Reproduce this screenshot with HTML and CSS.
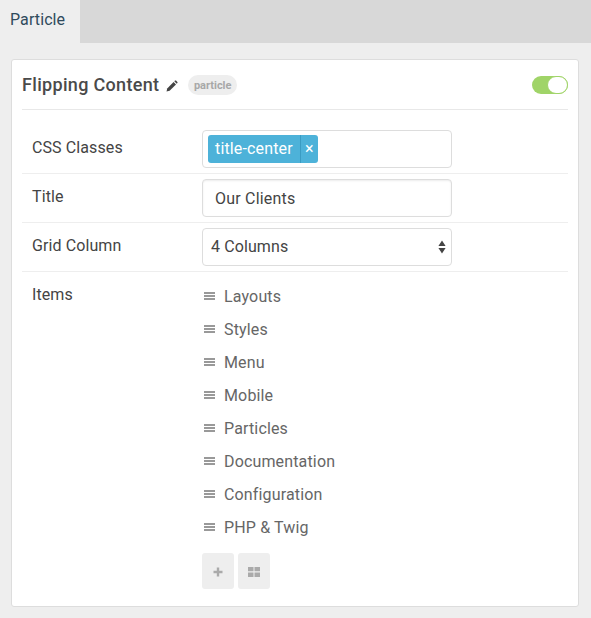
FILE: index.html
```html
<!DOCTYPE html>
<html lang="en">
<head>
  <meta charset="UTF-8">
  <title>Particle</title>
  <link rel="stylesheet" href="styles.css">
</head>
<body>
  <div class="tabs">
    <div class="tab">Particle</div>
  </div>

  <div class="card">
    <div class="card-head">
      <h4>Flipping Content</h4>
      <svg class="pencil" width="12" height="12" viewBox="0 0 12 12">
        <path d="M0.5 11.5 L1.2 8.4 L7.6 2 L10 4.4 L3.6 10.8 Z" fill="#444"/>
        <path d="M8.3 1.3 L9 0.6 Q9.5 0.2 10 0.6 L11.4 2 Q11.8 2.5 11.4 3 L10.7 3.7 Z" fill="#444"/>
      </svg>
      <span class="badge">particle</span>
      <div class="toggle"><span class="knob"></span></div>
    </div>

    <div class="row">
      <label>CSS Classes</label>
      <div class="field tags">
        <span class="tag"><span class="tag-name">title-center</span><span class="tag-x">×</span></span>
      </div>
    </div>

    <div class="row">
      <label>Title</label>
      <div class="field text">Our Clients</div>
    </div>

    <div class="row">
      <label>Grid Column</label>
      <div class="field select">
        4 Columns
        <svg class="arrows" width="8" height="14" viewBox="0 0 8 14">
          <path d="M4 0.5 L7.6 6 L0.4 6 Z M4 13.5 L0.4 8 L7.6 8 Z" fill="#444"/>
        </svg>
      </div>
    </div>

    <div class="row items-row">
      <label>Items</label>
      <div class="items">
        <ul>
          <li>Layouts</li>
          <li>Styles</li>
          <li>Menu</li>
          <li>Mobile</li>
          <li>Particles</li>
          <li>Documentation</li>
          <li>Configuration</li>
          <li>PHP &amp; Twig</li>
        </ul>
        <div class="buttons">
          <button>
            <svg width="10" height="10" viewBox="0 0 10 10"><path d="M3.8 0.5 H6.2 V3.8 H9.5 V6.2 H6.2 V9.5 H3.8 V6.2 H0.5 V3.8 H3.8 Z" fill="#aaa"/></svg>
          </button>
          <button>
            <svg width="12" height="10" viewBox="0 0 12 10"><path d="M0 0 H5.5 V4.3 H0 Z M6.5 0 H12 V4.3 H6.5 Z M0 5.5 H5.5 V10 H0 Z M6.5 5.5 H12 V10 H6.5 Z" fill="#aaa"/></svg>
          </button>
        </div>
      </div>
    </div>
  </div>
</body>
</html>
```

FILE: styles.css
```css
body {
  margin: 0;
  background: #eeeeee;
  font-family: 'Roboto', sans-serif;
  font-size: 16px;
  letter-spacing: 0.1px;
  color: #444;
  height: 618px;
  overflow: hidden;
}

.tabs {
  height: 43px;
  background: #d8d8d8;
}

.tab {
  width: 80px;
  height: 43px;
  box-sizing: border-box;
  padding: 10px 0 0 10px;
  background: #eeeeee;
  color: #2f4a5c;
  font-size: 16px;
  line-height: 20px;
}

.card {
  margin: 16px 12px 0 11px;
  height: 548px;
  box-sizing: border-box;
  padding: 0 10px;
  background: #fff;
  border: 1px solid #ddd;
  border-radius: 3px;
}

.card-head {
  display: flex;
  align-items: center;
  height: 49px;
  border-bottom: 1px solid #e8e8e8;
}

.card-head h4 {
  margin: 0;
  font-size: 18px;
  font-weight: 500;
  letter-spacing: 0.32px;
  color: #4a4a4a;
}

.pencil {
  margin: 3px 0 0 7px;
}

.badge {
  margin-left: 10px;
  padding: 0 5.5px;
  height: 20px;
  line-height: 22px;
  border-radius: 10px;
  background: #eeeeee;
  color: #a8a8a8;
  font-size: 11px;
  font-weight: 700;
  letter-spacing: 0;
}

.toggle {
  margin-left: auto;
  width: 36px;
  height: 18px;
  box-sizing: border-box;
  border-radius: 9px;
  background: #a0d468;
  display: flex;
  justify-content: flex-end;
}

.knob {
  width: 21px;
  height: 18px;
  box-sizing: border-box;
  border: 1px solid #a0d468;
  border-radius: 9px;
  background: #fff;
}

.row {
  display: flex;
  align-items: flex-start;
  padding: 5px 0;
  border-bottom: 1px solid #eee;
}

.row:nth-child(2) {
  padding-top: 20px;
}

.row label {
  width: 180px;
  padding: 6px 0 0 10px;
  box-sizing: border-box;
  line-height: 24px;
  flex-shrink: 0;
}

.field {
  width: 250px;
  height: 38px;
  box-sizing: border-box;
  border: 1px solid #ddd;
  border-radius: 4px;
  line-height: 36px;
  background: #fff;
}

.text {
  padding-left: 12px;
  line-height: 37px;
  letter-spacing: 0.2px;
  box-shadow: inset 0 1px 2px rgba(0, 0, 0, 0.08);
}

.select {
  padding-left: 8px;
  position: relative;
}

.arrows {
  position: absolute;
  right: 5px;
  top: 11px;
}

.tags {
  padding: 4px 5px;
  display: flex;
}

.tag {
  display: flex;
  height: 28px;
  line-height: 28px;
  background: #4db2d9;
  color: #fff;
  border-radius: 3px;
  letter-spacing: 0.15px;
}

.tag-name {
  padding: 0 7px;
  border-right: 1px solid #3a9cc3;
}

.tag-x {
  width: 17px;
  text-align: center;
  font-size: 16px;
}

.items-row {
  border-bottom: none;
  padding-top: 8px;
}

.row.items-row label {
  padding-top: 3px;
}

.items ul {
  list-style: none;
  margin: 0;
  padding: 0;
  letter-spacing: 0.15px;
}

.items li {
  height: 33px;
  line-height: 33px;
  padding-left: 22px;
  color: #666;
  background: linear-gradient(#999, #999) 2px 12px / 11px 2px no-repeat,
              linear-gradient(#999, #999) 2px 15px / 11px 2px no-repeat,
              linear-gradient(#999, #999) 2px 18px / 11px 2px no-repeat;
}

.buttons {
  display: flex;
  gap: 4px;
  margin-top: 9px;
}

.buttons button {
  width: 32px;
  height: 36px;
  padding: 1px 0 0;
  border: none;
  border-radius: 3px;
  background: #eeeeee;
  display: flex;
  align-items: center;
  justify-content: center;
}
```
